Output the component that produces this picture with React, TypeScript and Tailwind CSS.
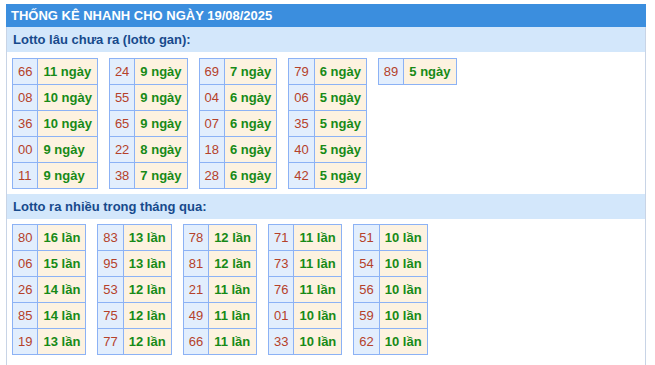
import React from "react";

type Pair = [string, string];

const gan: Pair[][] = [
  [["66", "11 ngày"], ["08", "10 ngày"], ["36", "10 ngày"], ["00", "9 ngày"], ["11", "9 ngày"]],
  [["24", "9 ngày"], ["55", "9 ngày"], ["65", "9 ngày"], ["22", "8 ngày"], ["38", "7 ngày"]],
  [["69", "7 ngày"], ["04", "6 ngày"], ["07", "6 ngày"], ["18", "6 ngày"], ["28", "6 ngày"]],
  [["79", "6 ngày"], ["06", "5 ngày"], ["35", "5 ngày"], ["40", "5 ngày"], ["42", "5 ngày"]],
  [["89", "5 ngày"]],
];

const nhieu: Pair[][] = [
  [["80", "16 lần"], ["06", "15 lần"], ["26", "14 lần"], ["85", "14 lần"], ["19", "13 lần"]],
  [["83", "13 lần"], ["95", "13 lần"], ["53", "12 lần"], ["75", "12 lần"], ["77", "12 lần"]],
  [["78", "12 lần"], ["81", "12 lần"], ["21", "11 lần"], ["49", "11 lần"], ["66", "11 lần"]],
  [["71", "11 lần"], ["73", "11 lần"], ["76", "11 lần"], ["01", "10 lần"], ["33", "10 lần"]],
  [["51", "10 lần"], ["54", "10 lần"], ["56", "10 lần"], ["59", "10 lần"], ["62", "10 lần"]],
];

function LottoTable({ rows }: { rows: Pair[] }) {
  return (
    <table className="border-collapse self-start">
      <tbody>
        {rows.map(([n, t], i) => (
          <tr key={i}>
            <td className="border border-[#8cb2f5] bg-[#e2eefd] px-[5px] py-[5px] text-[13px] leading-[15px] text-[#b5412a] whitespace-nowrap">
              {n}
            </td>
            <td className="border border-[#8cb2f5] bg-[#fdf2e0] px-[5px] py-[5px] text-[13px] leading-[15px] font-bold text-[#178a17] whitespace-nowrap">
              {t}
            </td>
          </tr>
        ))}
      </tbody>
    </table>
  );
}

export default function App() {
  return (
    <div
      className="w-[655px] h-[365px] overflow-hidden bg-white pt-[4px] pl-[6px]"
      style={{ fontFamily: '"Liberation Sans", Arial, sans-serif' }}
    >
      <div className="w-[640px]">
        <div className="h-[23px] bg-[#3b8ede] text-white font-bold text-[13px] leading-[23px] pl-[5px] whitespace-nowrap">
          THỐNG KÊ NHANH CHO NGÀY 19/08/2025
        </div>
        <div className="border-x border-[#c8d4e6] pb-[20px]">
          <div className="h-[25px] bg-[#d3e7fb] text-[#174a8c] font-bold text-[13px] leading-[25px] pl-[6px]">
            Lotto lâu chưa ra (lotto gan):
          </div>
          <div className="flex gap-[11px] pl-[5px] mt-[6px]">
            {gan.map((g, i) => (
              <LottoTable key={i} rows={g} />
            ))}
          </div>
          <div className="h-[25px] bg-[#d3e7fb] text-[#174a8c] font-bold text-[13px] leading-[25px] pl-[6px] mt-[5px]">
            Lotto ra nhiều trong tháng qua:
          </div>
          <div className="flex gap-[11px] pl-[5px] mt-[5px]">
            {nhieu.map((g, i) => (
              <LottoTable key={i} rows={g} />
            ))}
          </div>
        </div>
      </div>
    </div>
  );
}
